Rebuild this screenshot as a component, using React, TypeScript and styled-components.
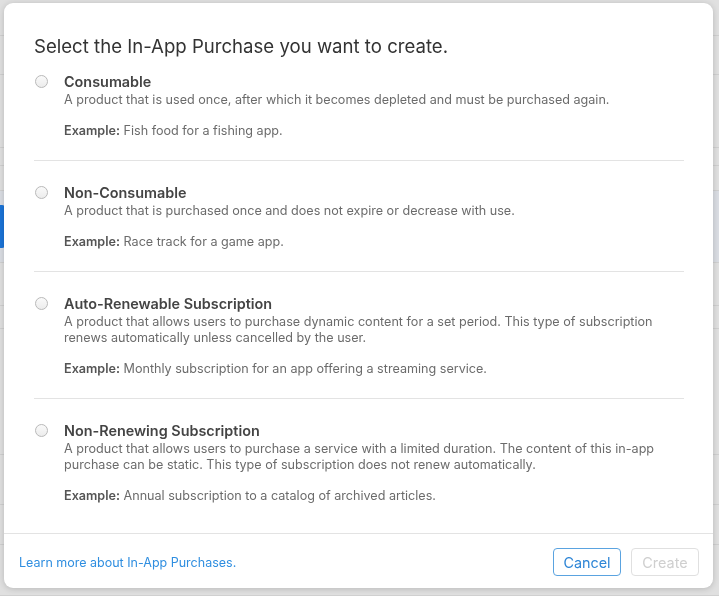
import React from 'react';
import styled, { createGlobalStyle } from 'styled-components';

const GlobalStyle = createGlobalStyle`
  html, body {
    margin: 0;
    padding: 0;
    width: 100%;
    height: 100%;
    overflow: hidden;
  }
  body {
    font-family: Inter, "Noto Sans", "Liberation Sans", sans-serif;
    background: #e2e2e2;
  }
`;

const Page = styled.div`
  display: flex;
  flex-direction: column;
  width: 719px;
  height: 596px;
  background: #e0e0e0;
`;

const PageRow = styled.div<{ $h: number; $accent?: boolean }>`
  height: ${(p) => p.$h}px;
  border-bottom: 1px solid #d0d0d0;
  display: flex;
  justify-content: space-between;
  background: ${(p) => (p.$accent ? '#dadde3' : 'transparent')};
`;

const SideTab = styled.div`
  width: 5px;
  margin: 14px 0;
  background: #1b74d8;
  border-radius: 0 3px 3px 0;
`;

const Overlay = styled.div`
  position: fixed;
  inset: 0;
  display: flex;
  align-items: flex-start;
  justify-content: flex-start;
  padding: 3px 0 0 4px;
`;

const Modal = styled.div`
  width: 709px;
  height: 585px;
  background: #fff;
  border-radius: 9px;
  box-shadow: 0 1px 6px rgba(0, 0, 0, 0.18);
  display: flex;
  flex-direction: column;
  overflow: hidden;
`;

const Body = styled.div`
  flex: 1;
  padding: 32px 29px 0 30px;
`;

const Heading = styled.h1`
  margin: 0 0 15px;
  font-size: 18.6px;
  line-height: 22px;
  font-weight: 400;
  color: #333;
`;

const Option = styled.label<{ $last?: boolean }>`
  display: flex;
  padding: 22px 0 21px;
  border-bottom: ${(p) => (p.$last ? 'none' : '1px solid #e3e3e3')};

  &:first-of-type {
    padding-top: 0;
  }
`;

const Radio = styled.span`
  flex: none;
  width: 13px;
  height: 13px;
  margin: 3px 16px 0 1px;
  border-radius: 50%;
  border: 1px solid #b9b9b9;
  background: linear-gradient(#fafafa, #ececec);
  box-sizing: border-box;
`;

const Text = styled.div`
  display: flex;
  flex-direction: column;
`;

const OptionTitle = styled.div`
  font-size: 14.4px;
  line-height: 20px;
  font-weight: 600;
  color: #444;
`;

const Desc = styled.div`
  font-size: 12.6px;
  line-height: 16px;
  color: #6b6b6b;
`;

const Example = styled.div`
  margin-top: 15px;
  font-size: 12.6px;
  line-height: 16px;
  color: #6b6b6b;

  b {
    font-weight: 600;
    color: #555;
  }
`;

const Footer = styled.div`
  height: 55px;
  box-sizing: border-box;
  border-top: 1px solid #e3e3e3;
  display: flex;
  align-items: center;
  justify-content: space-between;
  padding: 2px 14px 0 15px;
`;

const Link = styled.a`
  font-size: 12.5px;
  color: #2f8ee0;
  text-decoration: none;
  cursor: pointer;
`;

const Buttons = styled.div`
  display: flex;
  gap: 10px;
`;

const Button = styled.button<{ $disabled?: boolean }>`
  width: 68px;
  height: 28px;
  border-radius: 4px;
  background: #fff;
  font-family: inherit;
  font-size: 14.4px;
  border: 1px solid ${(p) => (p.$disabled ? '#e0e0e0' : '#5aa3e0')};
  color: ${(p) => (p.$disabled ? '#cfcfcf' : '#2f86d6')};
  padding: 0;
`;

const options = [
  {
    title: 'Consumable',
    desc: 'A product that is used once, after which it becomes depleted and must be purchased again.',
    example: 'Fish food for a fishing app.',
  },
  {
    title: 'Non-Consumable',
    desc: 'A product that is purchased once and does not expire or decrease with use.',
    example: 'Race track for a game app.',
  },
  {
    title: 'Auto-Renewable Subscription',
    desc: 'A product that allows users to purchase dynamic content for a set period. This type of subscription renews automatically unless cancelled by the user.',
    example: 'Monthly subscription for an app offering a streaming service.',
  },
  {
    title: 'Non-Renewing Subscription',
    desc: 'A product that allows users to purchase a service with a limited duration. The content of this in-app purchase can be static. This type of subscription does not renew automatically.',
    example: 'Annual subscription to a catalog of archived articles.',
  },
];

const backdropRows = [36, 38, 74, 17, 25, 72, 43, 23, 127, 50, 40, 51];

export default function App() {
  return (
    <>
      <GlobalStyle />
      <Page>
        {backdropRows.map((h, i) => (
          <PageRow key={i} $h={h} $accent={i === 5}>
            {i === 5 ? <SideTab /> : null}
          </PageRow>
        ))}
      </Page>
      <Overlay>
        <Modal>
          <Body>
            <Heading>Select the In-App Purchase you want to create.</Heading>
            {options.map((o, i) => (
              <Option key={o.title} $last={i === options.length - 1}>
                <Radio />
                <Text>
                  <OptionTitle>{o.title}</OptionTitle>
                  <Desc>{o.desc}</Desc>
                  <Example>
                    <b>Example:</b> {o.example}
                  </Example>
                </Text>
              </Option>
            ))}
          </Body>
          <Footer>
            <Link>Learn more about In-App Purchases.</Link>
            <Buttons>
              <Button>Cancel</Button>
              <Button $disabled disabled>
                Create
              </Button>
            </Buttons>
          </Footer>
        </Modal>
      </Overlay>
    </>
  );
}
